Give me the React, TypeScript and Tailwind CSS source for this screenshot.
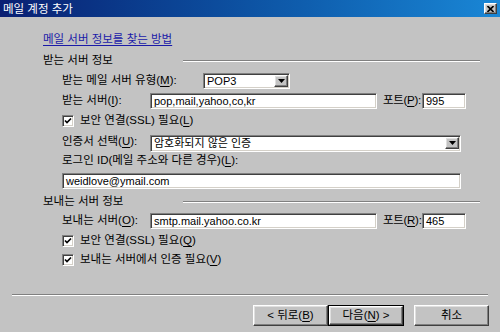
import React from 'react'

const sunken =
  'bg-white border border-t-[#808080] border-l-[#808080] border-b-white border-r-white shadow-[inset_1px_1px_0_#404040,inset_-1px_-1px_0_#d4d0c8]'
const raised =
  'bg-[#c3c3c3] border border-t-white border-l-white border-b-[#404040] border-r-[#404040] shadow-[inset_-1px_-1px_0_#808080,inset_1px_1px_0_#dfdfdf]'

const U = ({ c }: { c: string }) => <span className="underline underline-offset-2">{c}</span>

const TextBox = ({ value, className }: { value: string; className: string }) => (
  <div className={`${sunken} ${className} shrink-0 flex items-center px-[3px] text-[11px] leading-[12px] text-black whitespace-nowrap overflow-hidden`}>
    {value}
  </div>
)

const Select = ({ value, className }: { value: string; className: string }) => (
  <div className={`${sunken} ${className} shrink-0 flex items-center pl-[3px] pr-[1px] text-[11px] leading-[12px] text-black`}>
    <span className="flex-1 whitespace-nowrap overflow-hidden">{value}</span>
    <div className={`${raised} w-[14px] h-[12px] flex items-center justify-center`}>
      <svg width="7" height="4" viewBox="0 0 7 4">
        <path d="M0 0 H7 L3.5 4 Z" fill="#000" />
      </svg>
    </div>
  </div>
)

const Check = ({ children }: { children: React.ReactNode }) => (
  <div className="flex items-center gap-[6px] whitespace-nowrap">
    <div className={`${sunken} w-[12px] h-[12px] flex items-center justify-center`}>
      <svg width="8" height="8" viewBox="0 0 8 8">
        <path d="M1 3.5 L3 5.5 L7 1.5" stroke="#000" strokeWidth="1.7" fill="none" />
      </svg>
    </div>
    <span>{children}</span>
  </div>
)

const Heading = ({ children }: { children: React.ReactNode }) => (
  <div className="flex items-center pl-[43px] pr-[20px]">
    <span className="w-[140px] shrink-0 whitespace-nowrap">{children}</span>
    <div className="flex-1 h-[2px] border-t border-t-[#808080] border-b border-b-white" />
  </div>
)

const Label = ({ w, children, className = '' }: { w: string; children: React.ReactNode; className?: string }) => (
  <span className={`${w} ${className} shrink-0 whitespace-nowrap`}>{children}</span>
)

const Btn = ({ children, def }: { children: React.ReactNode; def?: boolean }) =>
  def ? (
    <div className="w-[76px] h-[21px] border border-black">
      <div className={`${raised} w-full h-full flex items-center justify-center`}>{children}</div>
    </div>
  ) : (
    <div className={`${raised} w-[75px] h-[21px] flex items-center justify-center`}>{children}</div>
  )

export default function App() {
  return (
    <div
      className="w-[500px] h-[332px] bg-[#c3c3c3] text-[11.5px] text-black flex flex-col overflow-hidden"
      style={{ fontFamily: '"Liberation Sans", "Noto Sans CJK KR", sans-serif' }}
    >
      {/* title bar */}
      <div className="h-[17px] bg-gradient-to-r from-[#0a1f72] to-[#1a87d6] flex items-center justify-between pl-[3px] pr-[3px]">
        <span className="text-white text-[11.5px] leading-[14px]">메일 계정 추가</span>
        <div className={`${raised} w-[13px] h-[11px] flex items-center justify-center`}>
          <svg width="7" height="6" viewBox="0 0 7 6">
            <path d="M0.5 0 L6.5 6 M6.5 0 L0.5 6" stroke="#000" strokeWidth="1.6" />
          </svg>
        </div>
      </div>

      <div className="h-[12px]" />

      <div className="h-[22px] flex items-center pl-[43px]">
        <span className="text-[#1a1aa8] underline underline-offset-2">메일 서버 정보를 찾는 방법</span>
      </div>

      <div className="h-[20px] flex items-center">
        <div className="flex-1">
          <Heading>받는 서버 정보</Heading>
        </div>
      </div>

      <div className="h-[20px] flex items-center pl-[62px]">
        <Label w="w-[141px]">
          받는 메일 서버 유형(<U c="M" />):
        </Label>
        <Select value="POP3" className="w-[87px] h-[16px]" />
      </div>

      <div className="h-[19px] flex items-center pl-[62px]">
        <Label w="w-[88px]">
          받는 서버(<U c="I" />):
        </Label>
        <TextBox value="pop,mail,yahoo,co,kr" className="w-[227px] h-[16px]" />
        <Label w="w-[39px]" className="ml-[6px] tracking-[-0.3px]">
          포트(<U c="P" />):
        </Label>
        <TextBox value="995" className="w-[44px] h-[16px]" />
      </div>

      <div className="h-[21px] flex items-center pl-[62px]">
        <Check>
          보안 연결(SSL) 필요(<U c="L" />)
        </Check>
      </div>

      <div className="h-[24px] flex items-center pl-[62px]">
        <Label w="w-[88px]" className="-mt-[3px]">
          인증서 선택(<U c="U" />):
        </Label>
        <Select value="암호화되지 않은 인증" className="w-[311px] h-[17px]" />
      </div>

      <div className="h-[11px] flex items-center pl-[62px]">
        <Label w="">
          로그인 ID(메일 주소와 다른 경우)(<U c="L" />):
        </Label>
      </div>

      <div className="h-[29px] flex items-center pl-[62px]">
        <TextBox value="weidlove@ymail.com" className="w-[399px] h-[16px]" />
      </div>

      <div className="h-[14px] flex items-center">
        <div className="flex-1">
          <Heading>보내는 서버 정보</Heading>
        </div>
      </div>

      <div className="h-[24px] flex items-center pl-[62px]">
        <Label w="w-[88px]">
          보내는 서버(<U c="O" />):
        </Label>
        <TextBox value="smtp.mail.yahoo.co.kr" className="w-[227px] h-[16px]" />
        <Label w="w-[39px]" className="ml-[6px] tracking-[-0.3px]">
          포트(<U c="R" />):
        </Label>
        <TextBox value="465" className="w-[44px] h-[16px]" />
      </div>

      <div className="h-[16px] flex items-center pl-[62px]">
        <Check>
          보안 연결(SSL) 필요(<U c="Q" />)
        </Check>
      </div>

      <div className="h-[22px] flex items-center pl-[62px]">
        <Check>
          보내는 서버에서 인증 필요(<U c="V" />)
        </Check>
      </div>

      <div className="h-[23px]" />

      <div className="mx-[12px] h-[2px] border-t border-t-[#808080] border-b border-b-white" />

      <div className="h-[9px]" />

      <div className="flex pl-[253px]">
        <Btn>
          &lt; 뒤로(<U c="B" />)
        </Btn>
        <Btn def>
          다음(<U c="N" />) &gt;
        </Btn>
        <div className="w-[10px]" />
        <Btn>취소</Btn>
      </div>
    </div>
  )
}
